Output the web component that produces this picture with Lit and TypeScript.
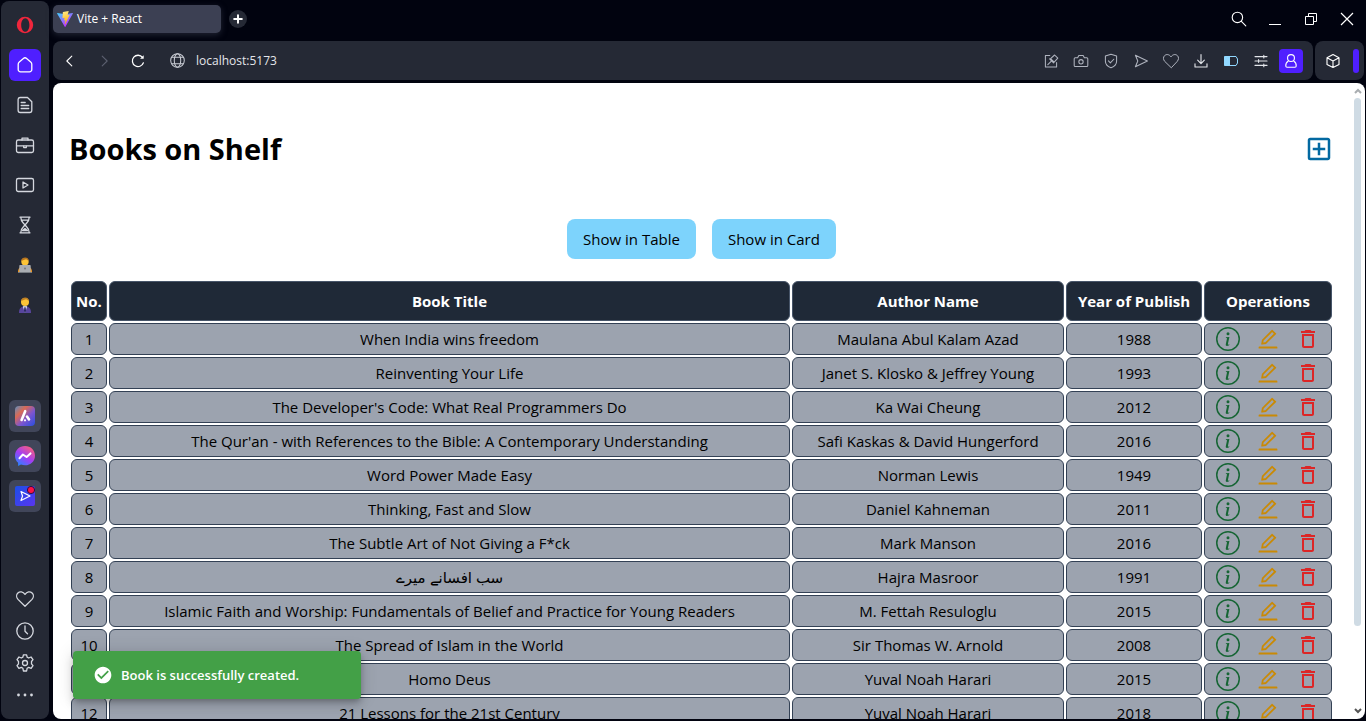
import { LitElement, html, svg, css } from "lit";
import { customElement, property, state } from "lit/decorators.js";

interface Book {
  title: string;
  author: string;
  year: number;
}

const BOOKS: Book[] = [
  { title: "When India wins freedom", author: "Maulana Abul Kalam Azad", year: 1988 },
  { title: "Reinventing Your Life", author: "Janet S. Klosko & Jeffrey Young", year: 1993 },
  { title: "The Developer's Code: What Real Programmers Do", author: "Ka Wai Cheung", year: 2012 },
  { title: "The Qur'an - with References to the Bible: A Contemporary Understanding", author: "Safi Kaskas & David Hungerford", year: 2016 },
  { title: "Word Power Made Easy", author: "Norman Lewis", year: 1949 },
  { title: "Thinking, Fast and Slow", author: "Daniel Kahneman", year: 2011 },
  { title: "The Subtle Art of Not Giving a F*ck", author: "Mark Manson", year: 2016 },
  { title: "سب افسانے میرے", author: "Hajra Masroor", year: 1991 },
  { title: "Islamic Faith and Worship: Fundamentals of Belief and Practice for Young Readers", author: "M. Fettah Resuloglu", year: 2015 },
  { title: "The Spread of Islam in the World", author: "Sir Thomas W. Arnold", year: 2008 },
  { title: "Homo Deus", author: "Yuval Noah Harari", year: 2015 },
  { title: "21 Lessons for the 21st Century", author: "Yuval Noah Harari", year: 2018 },
];

const stroke = (body: unknown, size = 20, w = 1.3) => html`<svg width=${size} height=${size} viewBox="0 0 20 20"
  fill="none" stroke="currentColor" stroke-width=${w} stroke-linecap="round" stroke-linejoin="round" aria-hidden="true">${body}</svg>`;

const heart = svg`<path d="M10 17.2L3 10.4C1.2 8.4 1.2 5.6 2.9 4C4.8 2.2 8 2.4 10 5.4C12 2.4 15.2 2.2 17.1 4C18.8 5.6 18.8 8.4 17 10.4Z"/>`;

const ICONS = {
  opera: html`<svg width="18" height="18" viewBox="0 0 18 18" aria-hidden="true"><path fill="#f0263c" fill-rule="evenodd" d="M9 .8a8.2 8.2 0 1 0 0 16.4A8.2 8.2 0 0 0 9 .8zM9.300 2.200c2.400 0 4.100 3 4.100 6.800s-1.700 6.800-4.100 6.800S5.200 12.800 5.200 9s1.700-6.800 4.100-6.800z"/></svg>`,
  home: stroke(svg`<path d="M3.200 9.200c0-1 .4-1.700 1.100-2.300l4.100-3.500a2.500 2.500 0 0 1 3.200 0l4.100 3.500c.7.6 1.100 1.300 1.100 2.300v5.300a2.300 2.300 0 0 1-2.300 2.300h-9a2.300 2.300 0 0 1-2.300-2.300z"/>`),
  page: stroke(svg`<path d="M5 2.500h7.500l4.300 4.300v8.500a2.200 2.200 0 0 1-2.200 2.200H5.300a2.200 2.200 0 0 1-2.200-2.200V4.600A2.100 2.100 0 0 1 5 2.500zM6.200 7.500h4M6.200 10.500h7.500M6.200 13.500h7.500"/>`),
  briefcase: stroke(svg`<rect x="1.500" y="5" width="17" height="12.500" rx="1.800"/><path d="M7 5V3.200h6V5M1.500 10.800h7M11.500 10.800h7M8.700 10.800v1.800h2.600v-1.800z"/>`),
  video: stroke(svg`<rect x="1.500" y="3.500" width="17" height="13" rx="1.800"/><path d="M8 7v6l5-3z"/>`),
  hourglass: stroke(svg`<path d="M5 2.200h10M5 17.800h10M5.800 2.200c0 5 2.400 5.600 4.200 7.800 1.800-2.200 4.200-2.800 4.200-7.800M5.800 17.800c0-5 2.400-5.600 4.200-7.800 1.800 2.200 4.200 2.800 4.200 7.800M7.200 5.200h5.600M7.500 15.500l2.500-2 2.500 2z"/>`),
  coder: html`<svg width="16" height="16" viewBox="0 0 16 16" aria-hidden="true"><path fill="#f39a24" d="M1 15c0-4 2.500-6 7-6s7 2 7 6z"/><circle cx="8" cy="4.700" r="3.700" fill="#fcc437"/><path fill="#b8741f" d="M4.300 4C4.300 1.600 6 .4 8.200.4s3.600 1.500 3.500 3.600C10.700 3.200 10 2.700 9.200 2.200 7.800 2.700 6 3 4.300 4z"/><rect x="2.300" y="8" width="11.400" height="7" rx=".8" fill="#a9adb2"/><circle cx="8" cy="11.500" r="1" fill="#73777c"/><path fill="#8b9096" d="M1 15h14v.8H1z"/></svg>`,
  manager: html`<svg width="16" height="16" viewBox="0 0 16 16" aria-hidden="true"><path fill="#58459d" d="M2 16c0-5 2-6.500 6-6.500s6 1.500 6 6.500z"/><circle cx="8" cy="4.900" r="4" fill="#fcc437"/><path fill="#c08024" d="M4.200 4C4.200 1.600 6 .4 8.200.4S12 2 11.800 4C10.700 3.200 10 2.700 9.200 2.200 7.800 2.700 6 3 4.200 4z"/><path fill="#e6edf8" d="M5.800 9.200L8 16l2.200-6.800z"/><path fill="#28245f" d="M7.300 10.200h1.400L9 14l-1 2-1-2z"/></svg>`,
  aria: html`<svg width="20" height="20" viewBox="0 0 20 20" aria-hidden="true"><defs><linearGradient id="ga" x1="0" y1="0" x2="1" y2="1"><stop stop-color="#5b8fc0"/><stop offset=".3" stop-color="#d96a55"/><stop offset=".6" stop-color="#7d55cf"/><stop offset="1" stop-color="#274fe0"/></linearGradient></defs><rect width="20" height="20" rx="4" fill="url(#ga)"/><path d="M10.200 5.200L6.600 14M12 10.500l2 3" fill="none" stroke="#fff" stroke-width="2.600" stroke-linecap="round"/><circle cx="10" cy="14.300" r="1.100" fill="#fff"/></svg>`,
  messenger: html`<svg width="20" height="20" viewBox="0 0 20 20" aria-hidden="true"><defs><linearGradient id="gm" x1=".1" y1="1" x2=".8" y2="0"><stop stop-color="#1c8cff"/><stop offset=".5" stop-color="#a23df5"/><stop offset="1" stop-color="#ff5f76"/></linearGradient></defs><path fill="url(#gm)" d="M10 0C4.300 0 0 4.100 0 9.700c0 2.900 1.200 5.400 3.100 7.100v3.100l2.900-1.300c1.300.5 2.600.7 4 .7 5.700 0 10-4.100 10-9.600S15.700 0 10 0z"/><path d="M4.500 12.200l3.400-3.700 3.700 2.500 3.900-3.600" fill="none" stroke="#fff" stroke-width="2" stroke-linecap="round" stroke-linejoin="round"/></svg>`,
  player: html`<svg width="20" height="20" viewBox="0 0 20 20" overflow="visible" aria-hidden="true"><defs><linearGradient id="gp" x1="0" y1="0" x2="1" y2="1"><stop stop-color="#1c4fe8"/><stop offset="1" stop-color="#5a35f0"/></linearGradient></defs><rect width="20" height="20" rx="2" fill="url(#gp)"/><path d="M6 5.500l9 4.500-9 4.500 1.500-4.500z" fill="none" stroke="#fff" stroke-width="1.200" stroke-linejoin="round"/><circle cx="16" cy="4" r="3.600" fill="#fb1048" stroke="#2c1140" stroke-width="1"/></svg>`,
  heart: stroke(heart),
  clock: stroke(svg`<circle cx="10" cy="10" r="8.200"/><path d="M10 5v5.300l2.500 2.500"/>`),
  gear: stroke(svg`<circle cx="10" cy="10" r="2.500"/><path d="M8.400 1.800h3.200l.5 2.400 1.600.8 2.300-1 2 2.600-1.500 1.900v2.300l1.500 1.900-1.900 2.600-2.400-.9-1.600.9-.5 2.700H8.400l-.5-2.700-1.600-.9-2.400.9L2 12.700l1.500-1.900V8.500L2 6.600 4 4l2.300 1 1.600-.8z"/>`),
  dots: html`<svg width="20" height="20" viewBox="0 0 20 20" fill="currentColor" aria-hidden="true"><circle cx="3.500" cy="10" r="1.400"/><circle cx="10" cy="10" r="1.400"/><circle cx="16.500" cy="10" r="1.400"/></svg>`,
  vite: html`<svg width="16" height="16" viewBox="0 0 32 32" aria-hidden="true"><defs><linearGradient id="gv" x1="0" y1="0" x2=".6" y2=".9"><stop stop-color="#41d1ff"/><stop offset="1" stop-color="#bd34fe"/></linearGradient><linearGradient id="gy" x1=".4" y1="0" x2=".6" y2="1"><stop stop-color="#ffea83"/><stop offset="1" stop-color="#ffa800"/></linearGradient></defs><path fill="url(#gv)" d="M31.800 5.200L16.900 31.600a.8.8 0 0 1-1.400 0L.2 5.200a.8.8 0 0 1 .9-1.200l15 2.600L30.900 4a.8.8 0 0 1 .9 1.200z"/><path fill="url(#gy)" d="M23 .1L12 2.200a.4.4 0 0 0-.3.400L11 14a.4.4 0 0 0 .5.4l3.100-.7a.4.4 0 0 1 .5.5l-1 4.500a.4.400 0 0 0 .5.5l1.900-.6a.4.400 0 0 1 .5.5l-1.500 7c-.1.400.5.700.7.300l9.200-18.200a.4.400 0 0 0-.4-.6l-3.200.6a.4.400 0 0 1-.5-.5l2.100-7.200A.4.400 0 0 0 23 .1z"/></svg>`,
  plus: stroke(svg`<path d="M10 4.500v11M4.500 10h11"/>`, 14, 2.8),
  search: stroke(svg`<circle cx="8" cy="8" r="6.500"/><path d="M13 13L18.500 18.500"/>`, 16, 1.4),
  minimize: html`<svg width="14" height="14" viewBox="0 0 14 14" fill="currentColor" aria-hidden="true"><path d="M1 12h12v1H1z"/></svg>`,
  restore: html`<svg width="14" height="14" viewBox="0 0 14 14" fill="none" stroke="currentColor" aria-hidden="true"><path d="M1.500 4.500h8v8h-8zM4.500 4.500v-3h8v8h-3"/></svg>`,
  close: html`<svg width="14" height="14" viewBox="0 0 14 14" fill="none" stroke="currentColor" stroke-width="1.200" aria-hidden="true"><path d="M1 1l12 12M13 1L1 13"/></svg>`,
  back: stroke(svg`<path d="M12 4.500L6.500 10l5.500 5.500"/>`, 18, 1.200),
  forward: stroke(svg`<path d="M8 4.500l5.500 5.500L8 15.500"/>`, 18, 1.200),
  reload: stroke(svg`<path d="M16 12A6.300 6.300 0 1 1 15 6"/><path d="M16.300 3.500v4h-4z" fill="currentColor" stroke="none"/>`, 18, 1.400),
  globe: stroke(svg`<circle cx="10" cy="10" r="8"/><ellipse cx="10" cy="10" rx="3.800" ry="8"/><path d="M3 6.300h14M3 13.700h14"/>`, 17, 1.2),
  note: stroke(svg`<path d="M8.500 3H3v14.500h14V12M6 14.500l4.800-4.800M9.500 7l5-4.500 4 4-4.500 5zM8.200 7.400l5 5"/>`, 16),
  camera: stroke(svg`<path d="M2.800 6h3l1.500-2.800h5.400L14.200 6h3a1.300 1.300 0 0 1 1.300 1.300v8.400a1.300 1.300 0 0 1-1.300 1.300H2.800a1.300 1.300 0 0 1-1.300-1.300V7.300A1.300 1.300 0 0 1 2.800 6z"/><circle cx="10" cy="11" r="2.700"/>`, 16),
  shield: stroke(svg`<path d="M10 1.500l7 2.300v6.500c0 4-3 6.700-7 8.200-4-1.500-7-4.200-7-8.200V3.800zM6.800 9.800L9.200 12.300 13.500 7.800"/>`, 16),
  send: stroke(svg`<path d="M3 2.800L18 10 3 17.200 6 10z"/>`, 16),
  like: stroke(heart, 18, 1.1),
  download: stroke(svg`<path d="M10 2v11M5.800 9l4.200 4.200L14.200 9M2.500 13.500v4h15v-4"/>`, 16, 1.400),
  battery: html`<svg width="16" height="16" viewBox="0 0 16 16" aria-hidden="true"><path d="M1.500 3.500H13L14.500 6v4L13 12.500H1.500z" fill="none" stroke="#91d8ff"/><path d="M1.500 3.500h5.500v9H1.500z" fill="#91d8ff"/></svg>`,
  sliders: stroke(svg`<path d="M2.500 4.500h15M2.500 10h15M2.500 15.500h15M13.500 2.800v3.400M7 8.300v3.400M13.500 13.800v3.400"/>`, 16, 1.400),
  person: stroke(svg`<circle cx="10" cy="6.300" r="4.300"/><path d="M6.300 10.300c-2 1.300-3 3.400-2.800 6a1.500 1.500 0 0 0 1.500 1.500h10a1.500 1.500 0 0 0 1.500-1.500c.2-2.600-.8-4.700-2.800-6"/>`, 16, 1.400),
  cube: stroke(svg`<path d="M10 2l7.500 4v8.300L10 18.200l-7.500-3.900V6zM2.500 6L10 10l7.500-4M10 10v8"/>`, 16, 1.400),
  add: html`<svg width="30" height="30" viewBox="0 0 24 24" fill="currentColor" aria-hidden="true"><path d="M19 3H5a2 2 0 0 0-2 2v14a2 2 0 0 0 2 2h14c1.100 0 2-.9 2-2V5c0-1.100-.9-2-2-2zm0 16H5V5h14v14zm-8-2h2v-4h4v-2h-4V7h-2v4H7v2h4z"/></svg>`,
  info: html`<svg width="24" height="24" viewBox="0 0 16 16" fill="currentColor" aria-hidden="true"><path d="M8 15A7 7 0 1 1 8 1a7 7 0 0 1 0 14m0 1A8 8 0 1 0 8 0a8 8 0 0 0 0 16"/><path d="m8.930 6.588-2.290.287-.082.380.450.083c.294.070.352.176.288.469l-.738 3.468c-.194.897.105 1.319.808 1.319.545 0 1.178-.252 1.465-.598l.088-.416c-.2.176-.492.246-.686.246-.275 0-.375-.193-.304-.533zM9 4.500a1 1 0 1 1-2 0 1 1 0 0 1 2 0"/></svg>`,
  edit: html`<svg width="24" height="24" viewBox="0 0 1024 1024" fill="currentColor" aria-hidden="true"><path d="M257.700 752c2 0 4-.2 6-.5L431.900 722c2-.4 3.900-1.300 5.300-2.800l423.900-423.900a9.960 9.960 0 0 0 0-14.100L694.900 114.900c-1.900-1.900-4.400-2.900-7.100-2.900s-5.200 1-7.100 2.900L256.800 538.800c-1.500 1.500-2.400 3.300-2.800 5.300l-29.500 168.200a33.500 33.500 0 0 0 9.400 29.800c6.600 6.400 14.900 9.900 23.800 9.900zm67.400-174.400L687.800 215l73.300 73.300-362.700 362.600-88.900 15.700 15.600-89zM880 836H144c-17.700 0-32 14.300-32 32v36c0 4.400 3.600 8 8 8h784c4.400 0 8-3.600 8-8v-36c0-17.700-14.300-32-32-32z"/></svg>`,
  trash: html`<svg width="24" height="24" viewBox="0 0 24 24" fill="currentColor" aria-hidden="true"><path d="M16 9v10H8V9h8m-1.500-6h-5l-1 1H5v2h14V4h-3.500l-1-1zM18 7H6v12c0 1.100.9 2 2 2h8c1.100 0 2-.9 2-2V7z"/></svg>`,
  check: html`<svg width="20" height="20" viewBox="0 0 24 24" fill="currentColor" aria-hidden="true"><path d="M12 2C6.500 2 2 6.500 2 12S6.500 22 12 22 22 17.500 22 12 17.500 2 12 2M10 17L5 12L6.410 10.590L10 14.170L17.590 6.580L19 8L10 17Z"/></svg>`,
};

const shared = css`
  * { box-sizing: border-box; }
  button {
    display: inline-flex;
    align-items: center;
    justify-content: center;
    margin: 0;
    padding: 0;
    border: 0;
    background: none;
    color: inherit;
    font: inherit;
    cursor: pointer;
  }
  svg { display: block; flex: none; }
`;

@customElement("side-bar")
export class SideBar extends LitElement {
  static styles = [shared, css`
    :host {
      display: flex;
      flex-direction: column;
      padding: 8px;
      border-radius: 8px;
      background: #252935;
      color: #d5d8df;
    }
    .group { display: flex; flex-direction: column; gap: 8px; }
    .apps { margin-top: 79px; }
    .tools { margin-top: auto; gap: 0; }
    button { width: 32px; height: 32px; border-radius: 6px; }
    .active { background: #4f1fff; color: #fff; }
    .app { background: #41465a; }
  `];

  render() {
    const item = (label: string, icon: unknown, cls = "") =>
      html`<button class=${cls} aria-label=${label}>${icon}</button>`;
    return html`
      <nav class="group" aria-label="Workspaces">
        ${item("Opera menu", ICONS.opera)}
        ${item("Home", ICONS.home, "active")}
        ${item("Documents", ICONS.page)}
        ${item("Work", ICONS.briefcase)}
        ${item("Videos", ICONS.video)}
        ${item("Later", ICONS.hourglass)}
        ${item("Development", ICONS.coder)}
        ${item("Management", ICONS.manager)}
      </nav>
      <div class="group apps">
        ${item("Aria", ICONS.aria, "app")}
        ${item("Messenger", ICONS.messenger, "app")}
        ${item("Player", ICONS.player, "app")}
      </div>
      <div class="group tools">
        ${item("Favourites", ICONS.heart)}
        ${item("History", ICONS.clock)}
        ${item("Settings", ICONS.gear)}
        ${item("More", ICONS.dots)}
      </div>`;
  }
}

@customElement("browser-chrome")
export class BrowserChrome extends LitElement {
  static styles = [shared, css`
    :host { display: block; color: #fff; font-size: 12px; }
    .tabs { display: flex; align-items: center; height: 36px; }
    .tab {
      width: 168px;
      height: 28px;
      justify-content: flex-start;
      gap: 4px;
      padding: 0 4px;
      border-radius: 5px;
      background: #3c4053;
      box-shadow: 0 2px 6px #3c405388;
    }
    .new { width: 18px; height: 18px; margin-left: 8px; border-radius: 50%; background: #252935; }
    .window { display: flex; gap: 12px; margin-left: auto; padding-right: 6px; }
    .window button { width: 24px; height: 24px; }
    .bars { display: flex; gap: 2px; margin: 4px 1px 0 0; }
    .bar {
      display: flex;
      align-items: center;
      height: 39px;
      border-radius: 8px;
      background: #252935;
    }
    .main { flex: 1; padding: 0 10px 0 0; }
    .nav { width: 34px; height: 34px; }
    .off { color: #5c6070; }
    .globe { margin-left: 14px; color: #c9ccd4; }
    .address {
      flex: 1;
      min-width: 0;
      margin-left: 10px;
      padding: 0;
      border: 0;
      outline: 0;
      background: none;
      color: #e3e5ea;
      font: inherit;
      line-height: 20px;
    }
    .actions { display: flex; gap: 6px; color: #e3e5ea; }
    .actions button { width: 24px; height: 24px; }
    .actions .quiet { color: #b0b4bf; }
    .actions .profile { border-radius: 4px; background: #4f1fff; color: #fff; }
    .extra { width: 49px; padding-left: 10px; gap: 12px; overflow: hidden; }
    .accent { width: 6px; height: 24px; border-radius: 3px; background: #4f1fff; }
  `];

  render() {
    return html`
      <div class="tabs">
        <button class="tab">${ICONS.vite}<span>Vite + React</span></button>
        <button class="new" aria-label="New tab">${ICONS.plus}</button>
        <div class="window">
          <button aria-label="Search tabs">${ICONS.search}</button>
          <button aria-label="Minimize">${ICONS.minimize}</button>
          <button aria-label="Restore">${ICONS.restore}</button>
          <button aria-label="Close">${ICONS.close}</button>
        </div>
      </div>
      <div class="bars">
        <div class="bar main">
          <button class="nav" aria-label="Back">${ICONS.back}</button>
          <button class="nav off" aria-label="Forward">${ICONS.forward}</button>
          <button class="nav" aria-label="Reload">${ICONS.reload}</button>
          <span class="globe">${ICONS.globe}</span>
          <input class="address" type="text" aria-label="Address" .value=${"localhost:5173"} />
          <div class="actions">
            <button class="quiet" aria-label="Pin note">${ICONS.note}</button>
            <button class="quiet" aria-label="Snapshot">${ICONS.camera}</button>
            <button class="quiet" aria-label="Tracker blocking">${ICONS.shield}</button>
            <button class="quiet" aria-label="Send to flow">${ICONS.send}</button>
            <button class="quiet" aria-label="Bookmark">${ICONS.like}</button>
            <button aria-label="Downloads">${ICONS.download}</button>
            <button aria-label="Battery saver">${ICONS.battery}</button>
            <button aria-label="Easy setup">${ICONS.sliders}</button>
            <button class="profile" aria-label="Profile">${ICONS.person}</button>
          </div>
        </div>
        <div class="bar extra">
          <button aria-label="Extensions">${ICONS.cube}</button>
          <span class="accent"></span>
        </div>
      </div>`;
  }
}

@customElement("book-table")
export class BookTable extends LitElement {
  @property({ attribute: false }) books: Book[] = [];

  static styles = [shared, css`
    :host { display: block; }
    table {
      width: 100%;
      table-layout: fixed;
      border-collapse: separate;
      border-spacing: 2px;
      font-size: 15px;
      line-height: 22px;
    }
    .no { width: 36px; }
    .author { width: 272px; }
    .year { width: 136px; }
    .ops { width: 128px; }
    th, td {
      padding: 0;
      border: 1px solid #334155;
      border-radius: 6px;
      text-align: center;
      vertical-align: middle;
      white-space: nowrap;
    }
    th { height: 40px; border-color: #475569; background: #1f2937; color: #fff; font-weight: 700; }
    td { height: 32px; background: #9ca3af; color: #000; }
    .row { display: flex; justify-content: center; gap: 16px; }
    a { display: block; }
    .info { color: #166534; }
    .edit { color: #ca8a04; }
    .trash { color: #dc2626; }
  `];

  render() {
    return html`
      <table>
        <thead>
          <tr>
            <th class="no">No.</th>
            <th>Book Title</th>
            <th class="author">Author Name</th>
            <th class="year">Year of Publish</th>
            <th class="ops">Operations</th>
          </tr>
        </thead>
        <tbody>
          ${this.books.map((b, i) => html`
            <tr>
              <td>${i + 1}</td>
              <td>${b.title}</td>
              <td>${b.author}</td>
              <td>${b.year}</td>
              <td>
                <div class="row">
                  <a class="info" href="#details" aria-label="Details">${ICONS.info}</a>
                  <a class="edit" href="#edit" aria-label="Edit">${ICONS.edit}</a>
                  <a class="trash" href="#delete" aria-label="Delete">${ICONS.trash}</a>
                </div>
              </td>
            </tr>`)}
        </tbody>
      </table>`;
  }
}

@customElement("app-root")
export class AppRoot extends LitElement {
  @state() private books = BOOKS;

  static styles = [shared, css`
    :host {
      display: grid;
      grid-template-columns: 48px minmax(0, 1fr);
      gap: 4px;
      height: 100vh;
      box-sizing: border-box;
      padding: 1px 1px 2px 1px;
      overflow: hidden;
      background: #01030f;
      color: #000;
      font-family: "Segoe UI", "Open Sans", "Noto Sans", "DejaVu Sans", sans-serif;
      font-size: 15px;
      line-height: 24px;
    }
    .window { display: flex; flex-direction: column; min-height: 0; }
    .view {
      position: relative;
      display: flex;
      flex: 1;
      min-height: 0;
      margin-top: 3px;
      border-radius: 8px;
      overflow: hidden;
      background: #fff;
    }
    .content { flex: 1; min-width: 0; padding: 16px; overflow: hidden; }
    .head { display: flex; align-items: center; justify-content: space-between; }
    h1 { margin: 32px 0; font-size: 29px; line-height: 36px; font-weight: 700; }
    .add { color: #0369a1; }
    .modes { display: flex; justify-content: center; gap: 16px; margin: 20px 0; }
    .mode { height: 40px; padding: 0 16px; border-radius: 8px; background: #7dd3fc; }
    .scroll {
      display: flex;
      flex-direction: column;
      align-items: center;
      width: 15px;
      padding: 5px 0;
      color: #a9adb0;
    }
    .thumb { flex: 0 1 528px; width: 7px; margin-top: 4px; border-radius: 4px; background: #cfdbe4; }
    .down { margin-top: auto; color: #555; }
    .toast {
      position: absolute;
      left: 20px;
      bottom: 20px;
      display: flex;
      align-items: center;
      gap: 8px;
      min-width: 288px;
      height: 48px;
      padding: 0 20px;
      border-radius: 4px;
      background: #43a047;
      color: #fff;
      font-size: 13px;
      font-weight: 600;
      box-shadow: 0 3px 5px -1px #0003, 0 6px 10px #0002, 0 1px 18px #0002;
    }
  `];

  render() {
    return html`
      <side-bar></side-bar>
      <div class="window">
        <browser-chrome></browser-chrome>
        <main class="view">
          <div class="content">
            <header class="head">
              <h1>Books on Shelf</h1>
              <a class="add" href="#create" aria-label="Add book">${ICONS.add}</a>
            </header>
            <div class="modes">
              <button class="mode">Show in Table</button>
              <button class="mode">Show in Card</button>
            </div>
            <book-table .books=${this.books}></book-table>
          </div>
          <div class="scroll" aria-hidden="true">
            <svg width="8" height="6" viewBox="0 0 8 6" fill="none" stroke="currentColor" stroke-width="2"><path d="M1 5l3-3 3 3"/></svg>
            <div class="thumb"></div>
            <svg class="down" width="8" height="6" viewBox="0 0 8 6" fill="none" stroke="currentColor" stroke-width="2"><path d="M1 1l3 3 3-3"/></svg>
          </div>
          <div class="toast" role="status">${ICONS.check}<span>Book is successfully created.</span></div>
        </main>
      </div>`;
  }
}
